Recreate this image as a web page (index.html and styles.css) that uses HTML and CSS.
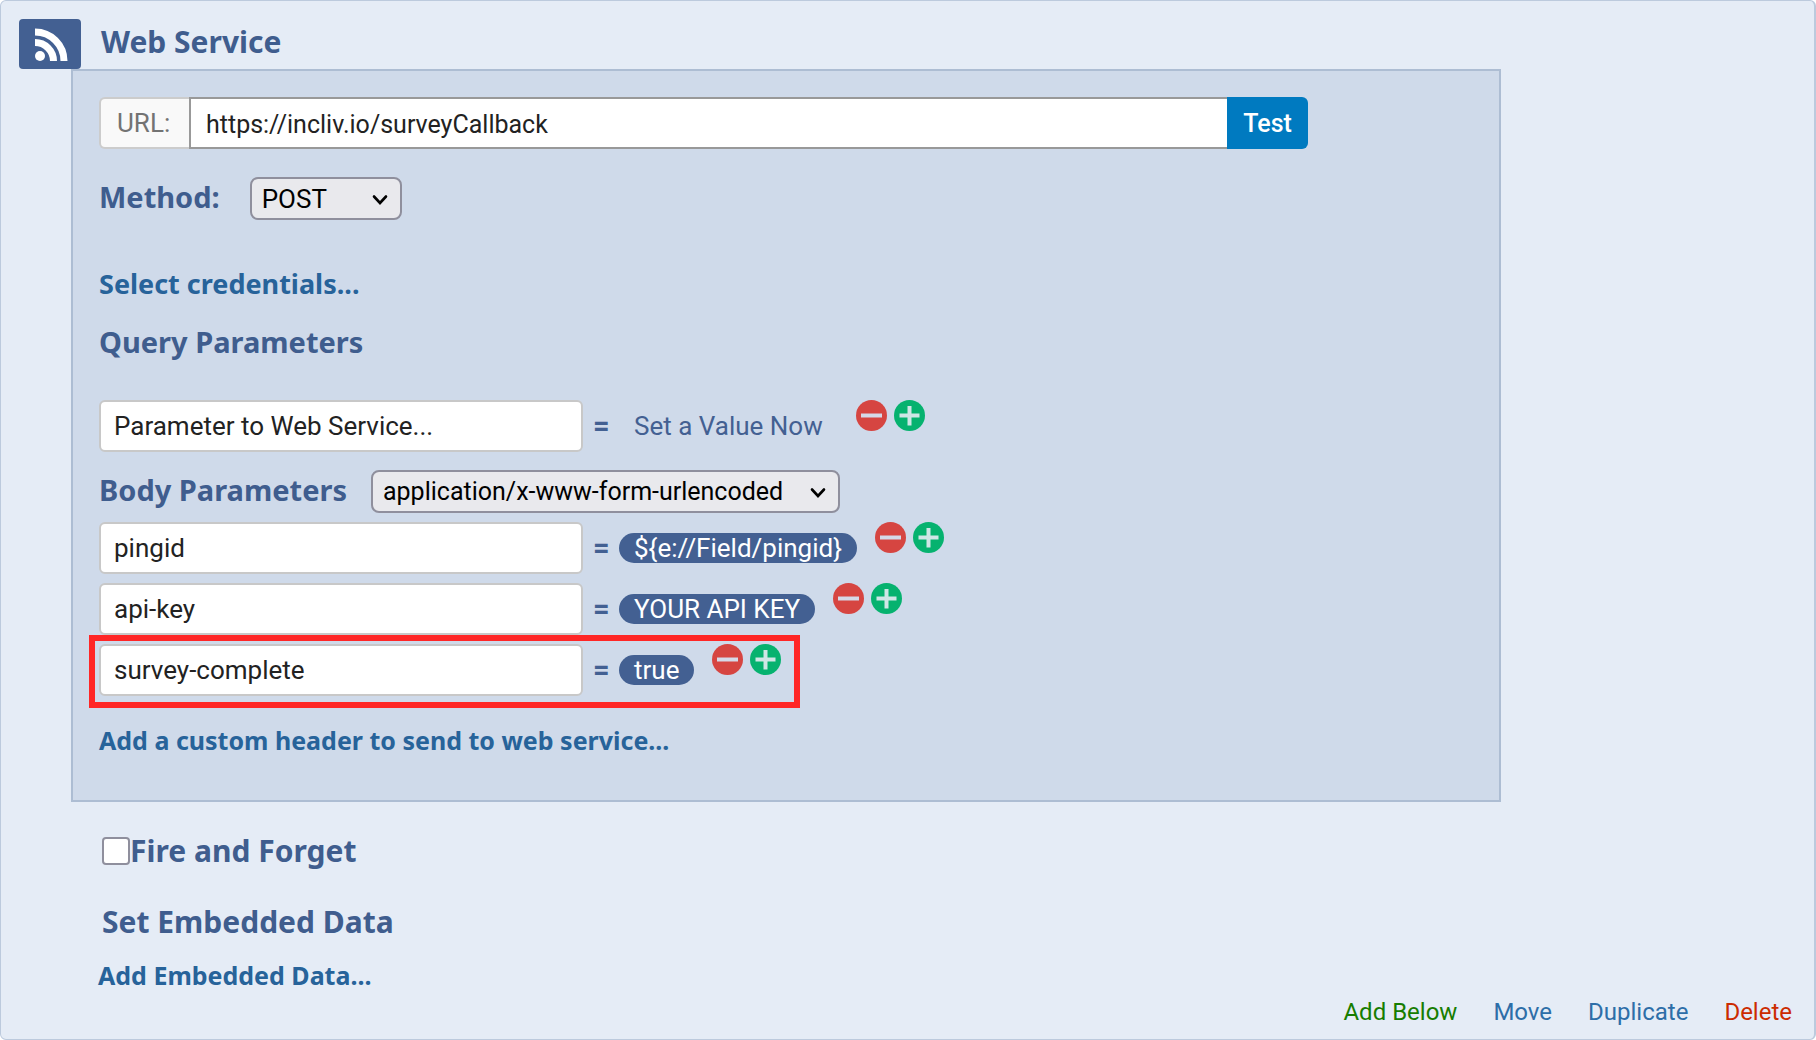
FILE: index.html
```html
<!DOCTYPE html>
<html lang="en">
<head>
<meta charset="utf-8">
<meta name="viewport" content="width=device-width, initial-scale=1">
<title>Web Service</title>
<link rel="stylesheet" href="styles.css">
</head>
<body>
<svg class="symbols">
  <symbol id="minus" viewBox="0 0 31 31"><circle cx="15.500" cy="15.500" r="15.500" fill="#d64541"/><path d="M5 15.500h21" stroke="#d5d9e8" stroke-width="4"/></symbol>
  <symbol id="plus" viewBox="0 0 31 31"><circle cx="15.500" cy="15.500" r="15.500" fill="#06b26f"/><path d="M5.500 15.500h20M15.500 6v19.500" stroke="#cfe6e6" stroke-width="4"/></symbol>
  <symbol id="chevron" viewBox="0 0 16 12"><path d="M2 2.500l6 6.500 6-6.500" fill="none" stroke="#000" stroke-width="2.600" stroke-linecap="round"/></symbol>
</svg>
<main class="card">
  <header class="head">
    <span class="badge">
      <svg width="33" height="33" viewBox="0 0 33 33" fill="none" stroke="#fff" stroke-width="7"><circle cx="5" cy="28" r="5" fill="#fff" stroke="none"/><path d="M0 14.500A18.500 18.500 0 0 1 18.500 33M0 4A29 29 0 0 1 29 33"/></svg>
    </span>
    <h1 class="heading">Web Service</h1>
  </header>

  <section class="panel">
    <div class="url">
      <label class="url-label" for="url">URL:</label>
      <input class="url-input" id="url" type="text" value="https://incliv.io/surveyCallback">
      <button class="test" type="button">Test</button>
    </div>
    <div class="method">
      <label class="heading" for="method">Method:</label>
      <span class="picker picker-method">
        <select id="method"><option>POST</option></select>
        <svg class="chevron"><use href="#chevron"/></svg>
      </span>
    </div>
    <a class="link link-credentials" href="#">Select credentials...</a>
    <h2 class="heading query">Query Parameters</h2>
    <div class="param">
      <input type="text" aria-label="Query parameter name" value="Parameter to Web Service...">
      <span class="equals">=</span>
      <a class="value value-empty" href="#">Set a Value Now</a>
      <span class="tools">
        <button type="button" aria-label="Remove"><svg><use href="#minus"/></svg></button>
        <button type="button" aria-label="Add"><svg><use href="#plus"/></svg></button>
      </span>
    </div>
    <div class="body-type">
      <label class="heading" for="type">Body Parameters</label>
      <span class="picker picker-type">
        <select id="type"><option>application/x-www-form-urlencoded</option></select>
        <svg class="chevron"><use href="#chevron"/></svg>
      </span>
    </div>
    <div class="params">
      <div class="param">
        <input type="text" aria-label="Body parameter name" value="pingid">
        <span class="equals">=</span>
        <a class="value" href="#">${e://Field/pingid}</a>
        <span class="tools">
          <button type="button" aria-label="Remove"><svg><use href="#minus"/></svg></button>
          <button type="button" aria-label="Add"><svg><use href="#plus"/></svg></button>
        </span>
      </div>
      <div class="param">
        <input type="text" aria-label="Body parameter name" value="api-key">
        <span class="equals">=</span>
        <a class="value" href="#">YOUR API KEY</a>
        <span class="tools">
          <button type="button" aria-label="Remove"><svg><use href="#minus"/></svg></button>
          <button type="button" aria-label="Add"><svg><use href="#plus"/></svg></button>
        </span>
      </div>
      <div class="param marked">
        <input type="text" aria-label="Body parameter name" value="survey-complete">
        <span class="equals">=</span>
        <a class="value" href="#">true</a>
        <span class="tools">
          <button type="button" aria-label="Remove"><svg><use href="#minus"/></svg></button>
          <button type="button" aria-label="Add"><svg><use href="#plus"/></svg></button>
        </span>
      </div>
    </div>
    <a class="link" href="#">Add a custom header to send to web service...</a>
  </section>

  <section class="extras">
    <label class="heading fire"><input type="checkbox">Fire and Forget</label>
    <h2 class="heading">Set Embedded Data</h2>
  </section>
  <a class="link link-embedded" href="#">Add Embedded Data...</a>

  <footer class="actions">
    <a class="add" href="#">Add Below</a>
    <a href="#">Move</a>
    <a href="#">Duplicate</a>
    <a class="delete" href="#">Delete</a>
  </footer>
</main>
</body>
</html>
```
FILE: styles.css
```css
* { box-sizing: border-box; }

body {
  margin: 0;
  background: #fff;
  color: #222;
  font: 26px/36px Roboto, "Liberation Sans", sans-serif;
}

a { text-decoration: none; }

input, select, button { font: inherit; color: inherit; margin: 0; }

.symbols { display: none; }

.card {
  display: flex;
  flex-direction: column;
  align-items: flex-start;
  min-height: 100vh;
  padding: 18px 22px 9px 18px;
  border: 1px solid #bccadd;
  border-right-width: 2px;
  border-radius: 6px;
  background: #e5ecf6;
}

.heading {
  margin: 0;
  color: #3f5d8e;
  font: bold 30px/40px "Noto Sans", "Open Sans", sans-serif;
}

.link {
  color: #27639a;
  font: bold 25px/36px "Noto Sans", "Open Sans", sans-serif;
}

.head { display: flex; align-items: center; gap: 20px; }
.head .heading { padding-bottom: 4px; }

.badge {
  display: grid;
  place-items: center;
  width: 62px;
  height: 50px;
  padding-left: 2px;
  border-radius: 4px;
  background: #436092;
}

.panel {
  display: flex;
  flex-direction: column;
  align-items: flex-start;
  width: calc(100% - 52px);
  max-width: 1430px;
  margin-left: 52px;
  padding: 26px 26px 42px;
  border: 2px solid #adbdd3;
  background: #cfdaea;
}

.panel .heading { font-size: 29px; }

.url {
  display: flex;
  width: 100%;
  max-width: 1209px;
  height: 52px;
}

.url-label {
  width: 90px;
  padding: 6px 0 0 16px;
  border: 2px solid #ccc;
  border-right: 0;
  border-radius: 6px 0 0 6px;
  background: #f9f9f9;
  color: #737373;
}

.url-input {
  flex: 1;
  min-width: 0;
  padding: 3px 15px 0;
  border: 2px solid #999;
  border-right: 0;
  background: #fff;
  font-size: 25px;
}

.test {
  width: 81px;
  padding: 2px 0 0;
  border: 0;
  border-radius: 0 6px 6px 0;
  background: #007ac0;
  color: #fff;
  font-size: 25px;
  font-weight: 500;
}

.method { display: flex; gap: 30px; margin-top: 28px; }

.picker { position: relative; height: 43px; }
.picker-method { width: 152px; }
.picker-type { width: 469px; }

.picker select {
  appearance: none;
  width: 100%;
  height: 100%;
  padding: 0 10px;
  border: 2px solid #8f8f9d;
  border-radius: 8px;
  background: #e9e9ed;
  color: #000;
  font-size: 25px;
}

.picker-method select { font-size: 26px; }

.chevron {
  position: absolute;
  top: 17px;
  right: 14px;
  width: 16px;
  height: 12px;
  pointer-events: none;
}

.link-credentials { margin-top: 46px; font-size: 27px; }
.query { margin: 20px 0 38px; }

.param { display: flex; align-items: center; height: 52px; }

.param input {
  width: 484px;
  height: 52px;
  padding: 0 13px;
  border: 2px solid #c8c8c8;
  border-radius: 6px;
  background: #fff;
}

.equals {
  width: 36px;
  padding-left: 10px;
  color: #436092;
  font-size: 29px;
  font-weight: bold;
}

.value {
  padding: 0 15px;
  border-radius: 15px;
  background: #436092;
  color: #fff;
  line-height: 30px;
}

.value-empty { background: none; color: #436092; }

.tools {
  display: flex;
  align-self: flex-start;
  gap: 7px;
  margin-left: 18px;
}

.tools button {
  width: 31px;
  height: 31px;
  padding: 0;
  border: 0;
  background: none;
}

.tools svg { display: block; width: 31px; height: 31px; }

.body-type { display: flex; gap: 24px; margin: 18px 0 9px; }

.params {
  display: flex;
  flex-direction: column;
  align-items: flex-start;
  gap: 9px;
  margin-bottom: 26px;
}

.marked { position: relative; }

/* Callout frame drawn over the row */
.marked::after {
  content: "";
  position: absolute;
  inset: -9px -19px -12px -10px;
  border: 6px solid #ff2626;
  pointer-events: none;
}

.extras {
  display: flex;
  flex-direction: column;
  gap: 31px;
  margin: 29px 0 0 83px;
}

.fire { display: flex; align-items: center; }

.fire input {
  appearance: none;
  width: 28px;
  height: 28px;
  border: 2px solid #8f8f9d;
  border-radius: 4px;
  background: #fff;
}

.link-embedded { margin: 15px 0 0 79px; }

.actions {
  display: flex;
  flex-wrap: wrap;
  gap: 36px;
  margin-top: auto;
  margin-left: auto;
  font-size: 24px;
}

.actions a { color: #2d6ea8; }
.actions .add { color: #177d00; }
.actions .delete { color: #cc2b00; }
```
